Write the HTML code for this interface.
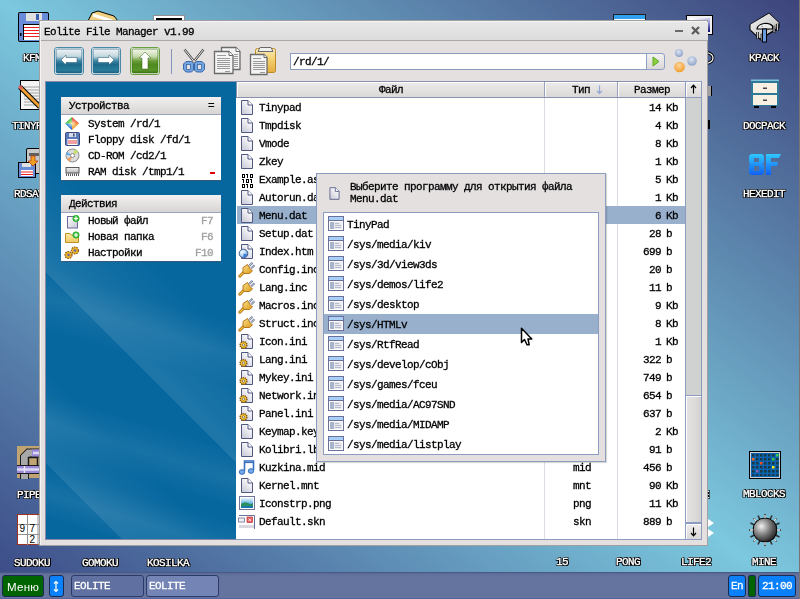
<!DOCTYPE html>
<html><head><meta charset="utf-8">
<style>
*{margin:0;padding:0;box-sizing:border-box}
html,body{width:800px;height:599px;overflow:hidden}
body{position:relative;background:linear-gradient(to bottom left,#3d447c 0%,#7cc8de 50%,#3a4784 100%);font-family:"Liberation Mono",monospace;font-size:11px;letter-spacing:-0.6px;color:#000}
.a{position:absolute}
svg.a{overflow:visible}
.t{position:absolute;white-space:pre;line-height:12px;will-change:transform;-webkit-text-stroke-width:0.3px}
.lbl{position:absolute;white-space:pre;font-family:"Liberation Mono",monospace;font-size:11px;letter-spacing:-0.6px;color:#fff;line-height:10px;will-change:transform;-webkit-text-stroke:0.35px #fff;
 text-shadow:1px 1px 0 #000,1px 0 0 #000,0 1px 0 #000,-1px 0 0 #000,0 -1px 0 #000,-1px 1px 0 #000,1px -1px 0 #000}
#win{left:39px;top:20px;width:669px;height:526px;background:#e4e0e0;border:1px solid #a0a0a0;box-shadow:inset 1px 1px 0 #f4f4f4}
#title{left:1px;top:1px;width:667px;height:19px;background:linear-gradient(#e8e8e8,#dcdcdc);border-bottom:1px solid #a8a8a8}
.hdr{position:absolute;background:linear-gradient(#f2f0f0,#d8d4d4);border-bottom:1px solid #98a4c0}
</style></head><body>

<svg width="0" height="0" style="position:absolute">
 <defs>
  <linearGradient id="gpage" x1="0.8" y1="0.1" x2="0.2" y2="0.9"><stop offset="0" stop-color="#ffffff"/><stop offset="1" stop-color="#cfcfdc"/></linearGradient>
  <linearGradient id="gplug" x1="0" y1="0" x2="1" y2="1"><stop offset="0" stop-color="#fbe08a"/><stop offset="1" stop-color="#d89a18"/></linearGradient>
  <linearGradient id="gsky" x1="0" y1="0" x2="0" y2="1"><stop offset="0" stop-color="#e8f4fc"/><stop offset="0.5" stop-color="#70b8e8"/><stop offset="1" stop-color="#2080c0"/></linearGradient>
  <radialGradient id="gglobe" cx="0.35" cy="0.35" r="0.75"><stop offset="0" stop-color="#f4faff"/><stop offset="0.5" stop-color="#b8d8f4"/><stop offset="1" stop-color="#3a78c8"/></radialGradient>
  <symbol id="i_doc" viewBox="0 0 18 17">
   <path d="M3.5 1.5H10L14.5 6V15.5H3.5Z" fill="url(#gpage)" stroke="#505880"/>
   <path d="M10 1.5V6H14.5" fill="#fff" stroke="#505880"/>
  </symbol>
  <symbol id="i_bin" viewBox="0 0 18 17"><path d="M4 3h3v4h-3z M5 4v2h1v-2z M12 3h3v4h-3z M13 4v2h1v-2z M8 8h3v4h-3z M9 9v2h1v-2z M4 13h3v4h-3z M5 14v2h1v-2z M12 13h3v4h-3z M13 14v2h1v-2z" fill="#000" fill-rule="evenodd"/><path d="M9 3h1v4h-1z M8 3h1v1h-1z M5 8h1v4h-1z M4 8h1v1h-1z M13 8h1v4h-1z M12 8h1v1h-1z M9 13h1v4h-1z M8 13h1v1h-1z" fill="#000"/></symbol>
  <symbol id="i_htm" viewBox="0 0 18 17">
   <path d="M3.5 1.5H10L14.5 6V15.5H3.5Z" fill="url(#gpage)" stroke="#505880"/>
   <path d="M10 1.5V6H14.5" fill="#fff" stroke="#505880"/>
   <circle cx="5.5" cy="10.5" r="4.3" fill="url(#gglobe)" stroke="#4a6090" stroke-width="1"/><path d="M5.5 10.5V14.5Q8 14 9.3 11.5Z" fill="#3a7ad0"/>
  </symbol>
  <symbol id="i_inc" viewBox="0 0 18 17">
   <path d="M1.8 15.2L6.5 10.5" stroke="#9a5a10" stroke-width="2.8" stroke-linecap="round"/>
   <path d="M1.8 15.2L6.5 10.5" stroke="#f8c830" stroke-width="1.4" stroke-linecap="round"/>
   <path d="M9.5 3.5L12 7.5L14.5 10L11.5 12.5H6.5L5 10.5V6.5Z" fill="url(#gplug)" stroke="#b06a10" stroke-width="0.9"/>
   <path d="M11 5L14.5 1.8M13 7.5L16.5 4.3" stroke="#6a7898" stroke-width="2"/>
   <path d="M11 5L14.5 1.8M13 7.5L16.5 4.3" stroke="#eef2f8" stroke-width="0.7"/>
  </symbol>
  <symbol id="i_ini" viewBox="0 0 18 17">
   <path d="M3.5 1.5H10L14.5 6V15.5H3.5Z" fill="url(#gpage)" stroke="#505880"/>
   <path d="M10 1.5V6H14.5" fill="#fff" stroke="#505880"/>
   <circle cx="5.5" cy="12" r="3.4" fill="#f0c030" stroke="#7a4a10" stroke-width="1.4" stroke-dasharray="1.2 0.9"/>
   <circle cx="5.5" cy="12" r="1.1" fill="#fff" stroke="#505050" stroke-width="0.6"/>
  </symbol>
  <symbol id="i_mid" viewBox="0 0 18 17">
   <path d="M6.5 12V2H15.5V11" fill="none" stroke="#3a70c0" stroke-width="1.6"/>
   <path d="M6.5 3.5H15.5" stroke="#3a70c0" stroke-width="1.2"/>
   <ellipse cx="4" cy="13" rx="2.8" ry="2.3" fill="#70a8e8" stroke="#3a70c0"/>
   <ellipse cx="13" cy="12" rx="2.8" ry="2.3" fill="#70a8e8" stroke="#3a70c0"/>
  </symbol>
  <symbol id="i_png" viewBox="0 0 18 17">
   <rect x="1.5" y="1.5" width="15" height="13" fill="#fff" stroke="#70749a"/>
   <rect x="3" y="3" width="12" height="10" fill="url(#gsky)"/>
   <path d="M3 9Q7 6 10 8T15 8V13H3Z" fill="#2a9060"/>
   <path d="M3 11H15V13H3Z" fill="#1a78b0"/>
  </symbol>
  <symbol id="i_skn" viewBox="0 0 18 17">
   <path d="M1 2.5H16.5V16" fill="none" stroke="#6a709a"/>
   <rect x="0.5" y="5" width="6" height="4" fill="#f0f0f0" stroke="#6a709a" stroke-width="0.8"/>
   <rect x="9" y="4" width="5.5" height="5.5" fill="#e86060" stroke="#b02020" stroke-width="0.6"/>
   <path d="M10.5 5.5L13 8M13 5.5L10.5 8" stroke="#fff" stroke-width="0.8"/>
   <rect x="1" y="12" width="15" height="3" fill="#d8d8e0"/>
  </symbol>
  <symbol id="i_app" viewBox="0 0 16 16">
   <rect x="0.5" y="0.5" width="15" height="14" fill="#fff" stroke="#6a709a"/>
   <rect x="1" y="1" width="14" height="3" fill="#a8d0f8"/>
   <path d="M1 4.5H15" stroke="#6a709a"/>
   <rect x="2" y="6" width="4" height="7" fill="#a8b4cc"/>
   <rect x="6" y="6" width="8" height="7" fill="#eaeaee"/>
   <path d="M7 7.5H11M7 9.5H13M7 11.5H13" stroke="#a8b0c8" stroke-width="0.8"/>
  </symbol>
 </defs>
</svg>

<!-- desktop icons left -->
<svg class="a" style="left:17px;top:11px" width="33" height="32">
 <rect x="1" y="1" width="31" height="30" rx="2" fill="#000"/>
 <rect x="2" y="2" width="29" height="28" rx="1" fill="#6a8cd8"/>
 <rect x="9" y="2" width="16" height="8" fill="#e0e0e0"/><rect x="19" y="3" width="3" height="6" fill="#3a60b0"/>
 <rect x="6" y="13" width="22" height="16" fill="#000"/><rect x="7" y="14" width="21" height="15" fill="#fff"/>
 <path d="M7 16.5H28M7 19.5H28M7 22.5H28M7 25.5H28" stroke="#f02020" stroke-width="1.2"/>
 <rect x="3" y="22" width="1.5" height="3" fill="#000"/>
</svg>
<div class="lbl" style="left:23px;top:53px">KFM</div>
<svg class="a" style="left:18px;top:78px" width="24" height="34">
 <rect x="2" y="2" width="26" height="30" fill="#000"/>
 <rect x="3" y="3" width="24" height="28" fill="#f4f4f4"/>
 <path d="M6 9H26M6 12H26M6 15H26M6 18H26M6 21H26M6 24H26M6 27H26" stroke="#a0a0a0" stroke-width="1"/>
 <path d="M2 9L22 29" stroke="#000" stroke-width="5"/>
 <path d="M2 9L22 29" stroke="#f0a030" stroke-width="3"/>
 <path d="M1 8L4 11" stroke="#e06060" stroke-width="3"/>
</svg>
<div class="lbl" style="left:12px;top:121px">TINYPAD</div>
<svg class="a" style="left:17px;top:147px" width="23" height="32">
 <rect x="9" y="1" width="20" height="26" rx="2" fill="#000"/>
 <rect x="10" y="2" width="18" height="24" rx="1" fill="#c8c8c8"/>
 <rect x="12" y="6" width="14" height="3" fill="#606060"/>
 <rect x="1" y="15" width="18" height="16" fill="#000"/>
 <rect x="2" y="16" width="16" height="14" fill="#6a8cd8"/>
 <rect x="5" y="16" width="9" height="4" fill="#e0e0e0"/>
 <rect x="4" y="23" width="12" height="6" fill="#fff"/><path d="M4 25H16M4 27.5H16" stroke="#f02020"/>
 <path d="M14 9H18V14H21L16 19L11 14H14Z" fill="#f0a020" stroke="#c04010" stroke-width="0.8"/>
</svg>
<div class="lbl" style="left:14px;top:189px">RDSAVE</div>
<svg class="a" style="left:16px;top:446px" width="33" height="32">
 <rect x="1" y="0" width="32" height="32" fill="#c0a474"/>
 <path d="M8.5 33V11L12.5 7H33" fill="none" stroke="#1c1c1c" stroke-width="9" stroke-linejoin="miter"/>
 <path d="M8.5 33V11L12.5 7H33" fill="none" stroke="#a8a8a8" stroke-width="7" stroke-linejoin="miter"/>
 <path d="M16 7H33V16" fill="none" stroke="#9a88d8" stroke-width="7"/>
 <path d="M17 7H33" fill="none" stroke="#dcd8f4" stroke-width="2.5"/>
 <rect x="12.5" y="11.5" width="9" height="9" fill="#c0a474" stroke="#1c1c1c" stroke-width="1.5"/>
 <path d="M1 23.5H33" stroke="#1c1c1c" stroke-width="9"/>
 <path d="M1 23.5H33" stroke="#9a88d8" stroke-width="7"/>
 <path d="M1 23.5H33" stroke="#dcd8f4" stroke-width="2.5"/>
 <path d="M8.5 20V27" stroke="#e4e4f0" stroke-width="1.5"/>
</svg>
<div class="lbl" style="left:17px;top:490px">PIPES</div>
<svg class="a" style="left:17px;top:514px" width="23" height="32">
 <rect x="0.5" y="0.5" width="31" height="30" fill="#fff" stroke="#a03020"/>
 <path d="M10.5 1V31M21 1V31M1 10.5H32M1 20.5H32" stroke="#909090"/>
 <text x="2.5" y="18" font-family="Liberation Sans" font-size="10" fill="#000">9</text>
 <text x="12.5" y="18" font-family="Liberation Sans" font-size="10" fill="#000">7</text>
 <text x="12.5" y="29" font-family="Liberation Sans" font-size="10" fill="#000">2</text>
</svg>
<div class="lbl" style="left:14px;top:558px">SUDOKU</div>
<div class="lbl" style="left:82px;top:558px">GOMOKU</div>
<div class="lbl" style="left:147px;top:558px">KOSILKA</div>
<!-- partial icons at top -->
<svg class="a" style="left:84px;top:8px" width="36" height="13">
 <path d="M4 13L8 5L14 3L30 8L34 13Z" fill="#f0d080" stroke="#000" stroke-width="1"/>
 <path d="M9 7L28 13" stroke="#fff" stroke-width="3"/>
</svg>
<div class="a" style="left:153px;top:15px;width:32px;height:6px;background:#fff;border:1px solid #909090;border-bottom:0"><div class="a" style="left:2px;top:2px;width:26px;height:4px;background:#000"></div></div>
<div class="a" style="left:613px;top:14px;width:33px;height:7px;background:#30a0f0;border:1px solid #202020;border-bottom:0;box-shadow:inset 0 -2px 0 #fff"></div>
<div class="a" style="left:686px;top:15px;width:27px;height:20px;background:#000;padding:1px"><div style="width:100%;height:100%;background:#f0f0f0;padding:2px"><div style="width:100%;height:100%;background:linear-gradient(160deg,#fff 10%,#a8a8e0 50%,#10107a 95%)"></div></div></div>
<!-- partial right edge bits -->
<svg class="a" style="left:706px;top:51px" width="10" height="14"><path d="M1 1.5Q7 3 7 7Q7 11 1 12.5" fill="none" stroke="#000" stroke-width="3"/><path d="M1 1.5Q7 3 7 7Q7 11 1 12.5" fill="none" stroke="#fff" stroke-width="1.2"/></svg>
<div class="a" style="left:708px;top:86px;width:4px;height:10px;background:#a0a0a0;border-right:1px solid #000"></div>
<div class="a" style="left:708px;top:120px;width:2px;height:9px;background:#000"></div>
<div class="lbl" style="left:703px;top:490px">E</div>
<div class="a" style="left:708px;top:519px;width:6px;height:8px;background:#fff;clip-path:polygon(0 0,100% 50%,0 100%)"></div>
<div class="a" style="left:708px;top:529px;width:6px;height:8px;background:#fff;clip-path:polygon(0 0,100% 50%,0 100%)"></div>

<!-- desktop icons right -->
<svg class="a" style="left:748px;top:10px" width="33" height="33">
 <defs><linearGradient id="gkp" x1="0" y1="0" x2="1" y2="1"><stop offset="0" stop-color="#f4f4f4"/><stop offset="1" stop-color="#b8b8b8"/></linearGradient></defs>
 <path d="M1.5 14.5L21 2.5L31.5 12.5V18L12 30L1.5 20Z" fill="#000"/>
 <path d="M2.5 14.5L21 3.5L30.5 12.5V17L12 28.5L2.5 19.5Z" fill="url(#gkp)"/>
 <path d="M12 24.5L30.5 13" stroke="#909090" stroke-width="1"/>
 <path d="M9.5 22V29M14 24V31M26 16V23M29.5 14V21" stroke="#000" stroke-width="2.6"/>
 <path d="M9.5 22V28.5M14 24V30.5M26 16V22.5M29.5 14V20.5" stroke="#c8c8c8" stroke-width="1.2"/>
 <path d="M9 18.5Q10 14.5 16 13.5Q22 13 24.5 16V19H9Z" fill="#e8e8e8" stroke="#000" stroke-width="1.2"/>
 <path d="M11 17Q14 15 20 15" stroke="#fff" stroke-width="1"/>
 <rect x="14.5" y="19" width="4" height="13" fill="#6a9ae0" stroke="#000" stroke-width="1"/>
</svg>
<div class="lbl" style="left:749px;top:53px">KPACK</div>
<svg class="a" style="left:750px;top:79px" width="30" height="32">
 <rect x="1" y="0.5" width="28" height="2" fill="#80c0d8"/>
 <rect x="1" y="2" width="28" height="25" fill="#2e7898"/>
 <rect x="3" y="4" width="24" height="10" fill="#f8f0e2"/>
 <rect x="3" y="16" width="24" height="10" fill="#f8f0e2"/>
 <rect x="13" y="8.5" width="4" height="1.5" fill="#404050"/><rect x="13" y="20.5" width="4" height="1.5" fill="#404050"/>
 <rect x="4" y="27" width="5" height="2" fill="#000"/><rect x="21" y="27" width="5" height="2" fill="#000"/>
</svg>
<div class="lbl" style="left:743px;top:121px">DOCPACK</div>
<svg class="a" style="left:748px;top:153px" width="34" height="24">
 <defs><linearGradient id="ghex" x1="0" y1="0" x2="0" y2="1"><stop offset="0" stop-color="#30c8ff"/><stop offset="1" stop-color="#1060f0"/></linearGradient></defs>
 <path d="M3 1H14L16 3V9.5L14.5 11L16 12.5V20L14 22H3L1 20V12.5L2.5 11L1 9.5V3Z M6 5V9H11V5Z M6 13V18H11V13Z" fill="url(#ghex)" fill-rule="evenodd"/>
 <path d="M18 1H33L31 5H23V9H30L29 13H23V22H18Z" fill="url(#ghex)"/>
</svg>
<div class="lbl" style="left:743px;top:189px">HEXEDIT</div>
<svg class="a" style="left:749px;top:451px" width="32" height="28">
 <rect x="0.5" y="0.5" width="31" height="27" fill="#d0d0d0" stroke="#000"/>
 <rect x="2" y="2" width="28" height="24" fill="#0a64b0"/>
 <g fill="#1a3848">
  <path d="M3 3h2.5v2.5H3zM7 3h2.5v2.5H7zM11 3h2.5v2.5H11zM15 3h2.5v2.5H15zM19 3h2.5v2.5H19zM23 3h2.5v2.5H23z"/>
  <path d="M3 7h2.5v2.5H3zM7 7h2.5v2.5H7zM11 7h2.5v2.5H11zM15 7h2.5v2.5H15zM19 7h2.5v2.5H19zM23 7h2.5v2.5H23zM27 7h2.5v2.5H27z"/>
  <path d="M3 11h2.5v2.5H3zM7 11h2.5v2.5H7zM11 11h2.5v2.5H11zM15 11h2.5v2.5H15zM19 11h2.5v2.5H19zM23 11h2.5v2.5H23zM27 11h2.5v2.5H27z"/>
  <path d="M3 15h2.5v2.5H3zM7 15h2.5v2.5H7zM11 15h2.5v2.5H11zM15 15h2.5v2.5H15zM19 15h2.5v2.5H19zM23 15h2.5v2.5H23zM27 15h2.5v2.5H27z"/>
  <path d="M3 19h2.5v2.5H3zM7 19h2.5v2.5H7zM11 19h2.5v2.5H11zM15 19h2.5v2.5H15zM19 19h2.5v2.5H19zM23 19h2.5v2.5H23zM27 19h2.5v2.5H27z"/>
  <path d="M3 23h2.5v2H3zM7 23h2.5v2H7zM11 23h2.5v2H11zM15 23h2.5v2H15zM19 23h2.5v2H19zM23 23h2.5v2H23zM27 23h2.5v2H27z"/>
 </g>
 <rect x="27" y="3" width="2.5" height="2.5" fill="#40d040"/>
 <rect x="3" y="7" width="2.5" height="2.5" fill="#f06020"/>
 <rect x="23" y="7" width="2.5" height="2.5" fill="#40c040"/>
 <rect x="11" y="11" width="2.5" height="2.5" fill="#f05020"/>
 <rect x="23" y="15" width="2.5" height="2.5" fill="#f0f020"/>
 <rect x="7" y="19" width="2.5" height="2.5" fill="#9060c0"/>
</svg>
<div class="lbl" style="left:743px;top:489px">MBLOCKS</div>
<svg class="a" style="left:748px;top:513px" width="34" height="34">
 <defs><radialGradient id="gmine" cx="0.35" cy="0.35" r="0.7"><stop offset="0" stop-color="#f0f0f0"/><stop offset="0.5" stop-color="#808080"/><stop offset="1" stop-color="#202020"/></radialGradient></defs>
 <path d="M17 1V33M1 17H33M5.5 5.5L28.5 28.5M28.5 5.5L5.5 28.5M10 2.5L24 31.5M24 2.5L10 31.5M2.5 10L31.5 24M2.5 24L31.5 10" stroke="#303030" stroke-width="1.6"/>
 <circle cx="17" cy="17" r="12" fill="url(#gmine)" stroke="#000" stroke-width="1"/>
 <path d="M17 2V5M17 29V32M2 17H5M29 17H32M6 6L8 8M26 26L28 28M28 6L26 8M6 28L8 26" stroke="#e8e8e8" stroke-width="1.3"/>
</svg>
<div class="lbl" style="left:752px;top:557px">MINE</div>
<div class="lbl" style="left:556px;top:557px">15</div>
<div class="lbl" style="left:616px;top:557px">PONG</div>
<div class="lbl" style="left:681px;top:557px">LIFE2</div>

<!-- TASKBAR -->
<div class="a" style="left:0;top:572px;width:800px;height:27px;background:linear-gradient(#4a5a88 0px,#4a5a88 1px,#5a6a94 1px,#64749e 4px,#64749e 26px,#56669a 26px)"></div>
<div class="a" style="left:2px;top:575px;width:42px;height:22px;background:#006400;border:1px solid #1a2a50;border-radius:3px"></div>
<div class="a" style="left:7px;top:580px;font-family:'Liberation Sans';font-size:11.5px;letter-spacing:0.3px;color:#fff;line-height:14px;will-change:transform">Меню</div>
<div class="a" style="left:49px;top:575px;width:15px;height:22px;background:#0a80fa;border:1px solid #1a2a50;border-radius:3px"></div>
<svg class="a" style="left:52px;top:580px" width="8" height="13"><path d="M4 1.5V11.5M2 3.5L4 1.5L6 3.5M2 9.5L4 11.5L6 9.5" fill="none" stroke="#fff" stroke-width="1.2"/></svg>
<div class="a" style="left:71px;top:575px;width:73px;height:22px;background:#6070a0;border:1px solid #2a3a6a;border-radius:3px"></div>
<div class="t" style="left:74px;top:580px;color:#fff">EOLITE</div>
<div class="a" style="left:146px;top:575px;width:73px;height:22px;background:#7484b4;border:1px solid #2a3a6a;border-radius:3px"></div>
<div class="t" style="left:149px;top:580px;color:#fff">EOLITE</div>
<div class="a" style="left:728px;top:575px;width:18px;height:22px;background:#0a80fa;border:1px solid #1a2a50;border-radius:3px"></div>
<div class="t" style="left:731px;top:580px;color:#fff">En</div>
<div class="a" style="left:748px;top:575px;width:8px;height:22px;background:#006400;border:1px solid #1a2a50;border-radius:2px"></div>
<div class="a" style="left:758px;top:575px;width:38px;height:22px;background:#0a80fa;border:1px solid #1a2a50;border-radius:3px"></div>
<div class="t" style="left:762px;top:580px;color:#fff">21:00</div>

<!-- WINDOW -->
<div id="win" class="a">
  <div id="title" class="a"></div>
  <div class="t" style="left:4px;top:5px">Eolite File Manager v1.99</div>
  <div class="a" style="left:635px;top:9px;width:8px;height:2px;background:#6a6a6a"></div>
  <svg class="a" style="left:651px;top:5px" width="9" height="9"><path d="M1 1L8 8M8 1L1 8" stroke="#5a5a5a" stroke-width="2.2"/></svg>
</div>

<!-- toolbar buttons -->
<svg class="a" style="left:54px;top:47px" width="30" height="28">
 <defs>
  <linearGradient id="gblue" x1="0" y1="0" x2="0" y2="1">
   <stop offset="0" stop-color="#f0f4f6"/><stop offset="0.3" stop-color="#c4d8e0"/><stop offset="0.5" stop-color="#3a84a4"/><stop offset="0.65" stop-color="#1c6a8a"/><stop offset="0.88" stop-color="#2a7c9c"/><stop offset="1" stop-color="#1e6080"/>
  </linearGradient>
  <linearGradient id="ggreen" x1="0" y1="0" x2="0" y2="1">
   <stop offset="0" stop-color="#f4f6ee"/><stop offset="0.3" stop-color="#c8dcb0"/><stop offset="0.5" stop-color="#6a9c38"/><stop offset="0.65" stop-color="#4e8a1e"/><stop offset="0.88" stop-color="#5a9428"/><stop offset="1" stop-color="#407818"/>
  </linearGradient>
 </defs>
 <rect x="0.5" y="0.5" width="29" height="27" rx="2.5" fill="#fff" stroke="#4a8aa8"/>
 <rect x="2" y="2" width="26" height="24" rx="1.5" fill="url(#gblue)" stroke="#2a6484" stroke-width="0.7"/>
 <path d="M7 13L12 8V10.5H23V15.5H12V18Z" fill="#fff" stroke="#1a4a64" stroke-width="0.8" stroke-opacity="0.6"/>
</svg>
<svg class="a" style="left:91px;top:47px" width="30" height="28">
 <rect x="0.5" y="0.5" width="29" height="27" rx="2.5" fill="#fff" stroke="#4a8aa8"/>
 <rect x="2" y="2" width="26" height="24" rx="1.5" fill="url(#gblue)" stroke="#2a6484" stroke-width="0.7"/>
 <path d="M23 13L18 8V10.5H7V15.5H18V18Z" fill="#fff" stroke="#1a4a64" stroke-width="0.8" stroke-opacity="0.6"/>
</svg>
<svg class="a" style="left:130px;top:47px" width="30" height="28">
 <rect x="0.5" y="0.5" width="29" height="27" rx="2.5" fill="#fff" stroke="#6aa040"/>
 <rect x="2" y="2" width="26" height="24" rx="1.5" fill="url(#ggreen)" stroke="#3e7018" stroke-width="0.7"/>
 <path d="M15 5L21 11H18V22H12V11H9Z" fill="#fff" stroke="#2e5a10" stroke-width="0.8" stroke-opacity="0.6"/>
</svg>
<div class="a" style="left:171px;top:49px;width:1px;height:25px;background:#8494b8"></div>
<!-- scissors -->
<svg class="a" style="left:182px;top:48px" width="25" height="26">
 <path d="M2.5 1.5L12.5 14M21.5 1.5L11.5 14" stroke="#4a4a4a" stroke-width="2.4"/>
 <path d="M2.5 1.5L12.5 14M21.5 1.5L11.5 14" stroke="#fafafa" stroke-width="0.9"/>
 <path d="M4 13.5H9.5L11.5 15.5V22L9.5 24H4L1.5 21.5V16Z" fill="#72a4e0" stroke="#3a68a8" stroke-width="1"/>
 <path d="M14.5 13.5H20L22.5 16V21.5L20 24H14.5L12.5 22V15.5Z" fill="#72a4e0" stroke="#3a68a8" stroke-width="1"/>
 <rect x="4.5" y="16.5" width="4" height="5" fill="#e4e0e0" stroke="#3a68a8" stroke-width="0.8"/>
 <rect x="15.5" y="16.5" width="4" height="5" fill="#e4e0e0" stroke="#3a68a8" stroke-width="0.8"/>
</svg>
<!-- copy -->
<svg class="a" style="left:213px;top:46px" width="29" height="29">
 <path d="M8.5 1.5H23L27 5.5V23.5H8.5Z" fill="#f4f4f4" stroke="#6a6a6a" stroke-width="1.3"/>
 <path d="M23 1.5V5.5H27" fill="#fff" stroke="#6a6a6a" stroke-width="1"/>
 <path d="M21 8.5H25M21 10.5H25M21 12.5H25M21 14.5H25M21 16.5H25M21 18.5H25M21 20.5H25" stroke="#9a9a9a" stroke-width="1"/>
 <path d="M1.5 5.5H16L20 9.5V27.5H1.5Z" fill="#f4f4f4" stroke="#6a6a6a" stroke-width="1.3"/>
 <path d="M16 5.5V9.5H20" fill="#fff" stroke="#6a6a6a" stroke-width="1"/>
 <path d="M4 9.5H13M4 12.5H17M4 14.5H17M4 16.5H17M4 18.5H17M4 20.5H17M4 22.5H17M12 25.5H17" stroke="#9a9a9a" stroke-width="1"/>
</svg>
<!-- paste -->
<svg class="a" style="left:249px;top:46px" width="29" height="31">
 <defs><linearGradient id="ggold" x1="0" y1="0" x2="0" y2="1"><stop offset="0" stop-color="#faecc0"/><stop offset="0.45" stop-color="#f4d070"/><stop offset="1" stop-color="#e4ac40"/></linearGradient></defs>
 <rect x="6.5" y="2.5" width="20" height="24" rx="2" fill="url(#ggold)" stroke="#b88a28" stroke-width="1"/>
 <path d="M9 5.5L11 1.5H22L24 5.5Z" fill="#f0f0f0" stroke="#6a6a6a" stroke-width="1"/>
 <path d="M1.5 8.5H15L18 11.5V28.5H1.5Z" fill="#f4f4f4" stroke="#6a6a6a" stroke-width="1.3"/>
 <path d="M15 8.5V11.5H18" fill="#fff" stroke="#6a6a6a" stroke-width="1"/>
 <path d="M4 12.5H12M4 15.5H16M4 17.5H16M4 19.5H16M4 21.5H16M4 23.5H16M11 26.5H16" stroke="#9a9a9a" stroke-width="1"/>
</svg>
<!-- address bar -->
<div class="a" style="left:290px;top:53px;width:357px;height:17px;background:#fff;border:1px solid #8c9cc0"></div>
<div class="t" style="left:293px;top:56px">/rd/1/</div>
<div class="a" style="left:646px;top:53px;width:19px;height:17px;background:linear-gradient(#f2f0f0,#dcd8d8);border:1px solid #8ca0c8;border-radius:0 3px 3px 0"></div>
<svg class="a" style="left:652px;top:56px" width="8" height="11"><path d="M1 1L7 5.5L1 10Z" fill="#8cd040" stroke="#58a820" stroke-width="1"/></svg>
<!-- balls -->
<svg class="a" style="left:672px;top:46px" width="30" height="30">
 <defs>
  <radialGradient id="bb" cx="0.45" cy="0.35" r="0.6"><stop offset="0" stop-color="#dce4f0"/><stop offset="1" stop-color="#94a8cc"/></radialGradient>
  <radialGradient id="bo" cx="0.45" cy="0.35" r="0.6"><stop offset="0" stop-color="#fcd8a0"/><stop offset="1" stop-color="#f4a030"/></radialGradient>
 </defs>
 <circle cx="7" cy="7" r="4" fill="url(#bb)"/>
 <circle cx="20" cy="15" r="4.8" fill="url(#bb)"/>
 <circle cx="7.5" cy="21" r="5.3" fill="url(#bo)"/>
</svg>

<!-- left blue panel -->
<div class="a" style="left:45px;top:81px;width:192px;height:459px;border:1px solid #8a8aa8;border-right:0;background:
 linear-gradient(45deg,rgba(255,255,255,0) 53px,rgba(255,255,255,.09) 54px,rgba(255,255,255,0) 120px,rgba(255,255,255,0) 188px,rgba(255,255,255,.10) 189px,rgba(255,255,255,0) 270px),
 linear-gradient(17deg,rgba(255,255,255,0) 20px,rgba(255,255,255,.07) 44px,rgba(255,255,255,0) 70px,rgba(255,255,255,0) 85px,rgba(255,255,255,.07) 112px,rgba(255,255,255,0) 140px,rgba(255,255,255,0) 200px,rgba(255,255,255,.07) 231px,rgba(255,255,255,0) 262px),
 #06679f"></div>
<!-- devices box -->
<div class="a" style="left:61px;top:97px;width:160px;height:83px;background:#fff;box-shadow:0 1px 0 #335a7a"></div>
<div class="hdr" style="left:61px;top:97px;width:160px;height:18px"></div>
<div class="t" style="left:69px;top:100px">Устройства</div>
<div class="t" style="left:208px;top:100px">=</div>
<svg class="a" style="left:65px;top:116px" width="15" height="15">
 <defs><clipPath id="cdia"><path d="M7 1L14 7.5L7 14L0 7.5Z"/></clipPath>
 <radialGradient id="gdc" cx="0.5" cy="0.5" r="0.5"><stop offset="0" stop-color="#fff8c0" stop-opacity=".9"/><stop offset="1" stop-color="#fff8c0" stop-opacity="0"/></radialGradient></defs>
 <g clip-path="url(#cdia)">
  <path d="M7 7.5L7 0L15 0L15 7.5Z" fill="#f04848"/>
  <path d="M7 7.5L15 7.5L15 15L7 15Z" fill="#f0a030"/>
  <path d="M7 7.5L7 15L0 15L0 7.5Z" fill="#2a90f0"/>
  <path d="M7 7.5L0 7.5L0 0L7 0Z" fill="#40c040"/>
  <path d="M7 7.5L7 15L-1 15Z" fill="#3070e0"/>
  <path d="M7 7.5L15 0L15 7.5Z" fill="#f07040"/>
  <circle cx="7" cy="7.5" r="5" fill="url(#gdc)"/>
 </g>
</svg>
<div class="t" style="left:88px;top:118px">System /rd/1</div>
<svg class="a" style="left:65px;top:132px" width="15" height="15">
 <rect x="0.5" y="0.5" width="14" height="13" rx="1" fill="#5a7ab8" stroke="#3a4a80"/>
 <rect x="4" y="1" width="7" height="4" fill="#d8dcea"/><rect x="8" y="1.5" width="1.5" height="3" fill="#3a4a80"/>
 <rect x="2.5" y="7" width="10" height="6" fill="#fff"/><path d="M3 9H12M3 11H12" stroke="#e04040" stroke-width="1"/>
</svg>
<div class="t" style="left:88px;top:134px">Floppy disk /fd/1</div>
<svg class="a" style="left:65px;top:148px" width="15" height="15">
 <circle cx="7.5" cy="7.5" r="6.5" fill="#dcdcdc" stroke="#8a8a8a"/>
 <path d="M7.5 7.5L13 4A6.5 6.5 0 0 0 10 1.5Z" fill="#c0e060"/><path d="M7.5 7.5L2 11A6.5 6.5 0 0 0 5 13.5Z" fill="#f0a060"/><path d="M7.5 7.5L2 4A6.5 6.5 0 0 0 1 7Z" fill="#60b0f0"/>
 <circle cx="7.5" cy="7.5" r="2" fill="#fff" stroke="#8a8a8a"/>
</svg>
<div class="t" style="left:88px;top:150px">CD-ROM /cd2/1</div>
<svg class="a" style="left:65px;top:167px" width="15" height="10">
 <defs><linearGradient id="gram" x1="0" y1="0" x2="0" y2="1"><stop offset="0" stop-color="#f4f4f4"/><stop offset="1" stop-color="#b8b8b8"/></linearGradient></defs>
 <rect x="1" y="0.5" width="13" height="5.5" fill="url(#gram)" stroke="#5a5a5a"/>
 <path d="M1.5 6.5V9M3.5 6.5V9M5.5 6.5V9M7.5 6.5V9M9.5 6.5V9M11.5 6.5V9M13.5 6.5V9" stroke="#5a5a5a" stroke-width="1"/>
</svg>
<div class="t" style="left:88px;top:166px">RAM disk /tmp1/1</div>
<div class="a" style="left:210px;top:172px;width:5px;height:2px;background:#e00000"></div>

<!-- actions box -->
<div class="a" style="left:61px;top:195px;width:160px;height:66px;background:#fff;box-shadow:0 1px 0 #335a7a"></div>
<div class="hdr" style="left:61px;top:195px;width:160px;height:18px"></div>
<div class="t" style="left:69px;top:198px">Действия</div>
<svg class="a" style="left:66px;top:215px" width="15" height="14">
 <defs><linearGradient id="gdoc" x1="0" y1="0" x2="1" y2="1"><stop offset="0" stop-color="#fff"/><stop offset="1" stop-color="#c8c8d8"/></linearGradient></defs>
 <rect x="1.5" y="1.5" width="10" height="11.5" fill="url(#gdoc)" stroke="#6a6a9a"/>
 <circle cx="10" cy="3.5" r="3.2" fill="#40c040" stroke="#20a020" stroke-width="0.6"/>
 <path d="M10 1.5V5.5M8 3.5H12" stroke="#fff" stroke-width="1.2"/>
</svg>
<div class="t" style="left:88px;top:215px">Новый файл</div>
<div class="t" style="left:201px;top:215px;color:#a0a0a0">F7</div>
<svg class="a" style="left:65px;top:231px" width="15" height="13">
 <defs><linearGradient id="gfold" x1="0" y1="0" x2="0" y2="1"><stop offset="0" stop-color="#fbeaa8"/><stop offset="1" stop-color="#f0c860"/></linearGradient></defs>
 <path d="M0.5 2.5H5L6.5 4H13.5V11.5H0.5Z" fill="url(#gfold)" stroke="#c09020"/>
 <circle cx="11" cy="4" r="3.2" fill="#40c040" stroke="#20a020" stroke-width="0.6"/>
 <path d="M11 2V6M9 4H13" stroke="#fff" stroke-width="1.2"/>
</svg>
<div class="t" style="left:88px;top:231px">Новая папка</div>
<div class="t" style="left:201px;top:231px;color:#a0a0a0">F6</div>
<svg class="a" style="left:64px;top:246px" width="16" height="14">
 <circle cx="4.5" cy="9" r="3.5" fill="#e8b030" stroke="#8a5a10" stroke-width="1.2" stroke-dasharray="1.5 1"/>
 <circle cx="11" cy="4.5" r="3.5" fill="#e8b030" stroke="#8a5a10" stroke-width="1.2" stroke-dasharray="1.5 1"/>
 <circle cx="4.5" cy="9" r="1.2" fill="#6a6a9a"/><circle cx="11" cy="4.5" r="1.2" fill="#6a6a9a"/>
</svg>
<div class="t" style="left:88px;top:247px">Настройки</div>
<div class="t" style="left:195px;top:247px;color:#a0a0a0">F10</div>

<!-- file list -->
<div class="a" style="left:236px;top:81px;width:450px;height:459px;background:#fff;border-top:1px solid #8890b0"></div>
<div class="a" style="left:236px;top:81px;width:1px;height:17px;background:#8890b0"></div>
<div class="a" style="left:237px;top:82px;width:448px;height:15px;background:linear-gradient(#eceaea,#dcd8d8);box-shadow:inset 1px 1px 0 #fff"></div>
<div class="a" style="left:236px;top:97px;width:450px;height:1px;background:#8890b0"></div>
<div class="a" style="left:544px;top:82px;width:1px;height:15px;background:#98a0c0;box-shadow:1px 0 0 #fff"></div>
<div class="a" style="left:617px;top:82px;width:1px;height:15px;background:#98a0c0;box-shadow:1px 0 0 #fff"></div>
<div class="a" style="left:544px;top:98px;width:1px;height:441px;background:#dcdce4"></div>
<div class="a" style="left:617px;top:98px;width:1px;height:441px;background:#dcdce4"></div>
<div class="a" style="left:237px;top:206px;width:448px;height:18px;background:#98b0cc"></div>
<div class="t" style="left:379px;top:84px">Файл</div>
<div class="t" style="left:572px;top:84px">Тип</div>
<svg class="a" style="left:596px;top:85px" width="7" height="10"><path d="M3.5 0.5V9M1 6L3.5 8.5L6 6" fill="none" stroke="#94a4d4" stroke-width="1.2"/></svg>
<div class="t" style="left:634px;top:84px">Размер</div>

<svg class="a" style="left:238px;top:99px" width="18" height="17"><use href="#i_doc"/></svg>
<div class="t" style="left:259px;top:102px">Tinypad</div>
<div class="t" style="left:649px;top:102px">14</div>
<div class="t" style="left:666px;top:102px">Kb</div>
<svg class="a" style="left:238px;top:117px" width="18" height="17"><use href="#i_doc"/></svg>
<div class="t" style="left:259px;top:120px">Tmpdisk</div>
<div class="t" style="left:655px;top:120px">4</div>
<div class="t" style="left:666px;top:120px">Kb</div>
<svg class="a" style="left:238px;top:135px" width="18" height="17"><use href="#i_doc"/></svg>
<div class="t" style="left:259px;top:138px">Vmode</div>
<div class="t" style="left:655px;top:138px">8</div>
<div class="t" style="left:666px;top:138px">Kb</div>
<svg class="a" style="left:238px;top:153px" width="18" height="17"><use href="#i_doc"/></svg>
<div class="t" style="left:259px;top:156px">Zkey</div>
<div class="t" style="left:655px;top:156px">1</div>
<div class="t" style="left:666px;top:156px">Kb</div>
<svg class="a" style="left:238px;top:171px" width="18" height="17"><use href="#i_bin"/></svg>
<div class="t" style="left:259px;top:174px">Example.asm</div>
<div class="t" style="left:655px;top:174px">5</div>
<div class="t" style="left:666px;top:174px">Kb</div>
<svg class="a" style="left:238px;top:189px" width="18" height="17"><use href="#i_doc"/></svg>
<div class="t" style="left:259px;top:192px">Autorun.dat</div>
<div class="t" style="left:655px;top:192px">1</div>
<div class="t" style="left:666px;top:192px">Kb</div>
<svg class="a" style="left:238px;top:207px" width="18" height="17"><use href="#i_doc"/></svg>
<div class="t" style="left:259px;top:210px">Menu.dat</div>
<div class="t" style="left:655px;top:210px">6</div>
<div class="t" style="left:666px;top:210px">Kb</div>
<svg class="a" style="left:238px;top:225px" width="18" height="17"><use href="#i_doc"/></svg>
<div class="t" style="left:259px;top:228px">Setup.dat</div>
<div class="t" style="left:649px;top:228px">28</div>
<div class="t" style="left:666px;top:228px">b</div>
<svg class="a" style="left:238px;top:243px" width="18" height="17"><use href="#i_htm"/></svg>
<div class="t" style="left:259px;top:246px">Index.htm</div>
<div class="t" style="left:643px;top:246px">699</div>
<div class="t" style="left:666px;top:246px">b</div>
<svg class="a" style="left:238px;top:261px" width="18" height="17"><use href="#i_inc"/></svg>
<div class="t" style="left:259px;top:264px">Config.inc</div>
<div class="t" style="left:649px;top:264px">20</div>
<div class="t" style="left:666px;top:264px">b</div>
<svg class="a" style="left:238px;top:279px" width="18" height="17"><use href="#i_inc"/></svg>
<div class="t" style="left:259px;top:282px">Lang.inc</div>
<div class="t" style="left:649px;top:282px">11</div>
<div class="t" style="left:666px;top:282px">b</div>
<svg class="a" style="left:238px;top:297px" width="18" height="17"><use href="#i_inc"/></svg>
<div class="t" style="left:259px;top:300px">Macros.inc</div>
<div class="t" style="left:655px;top:300px">9</div>
<div class="t" style="left:666px;top:300px">Kb</div>
<svg class="a" style="left:238px;top:315px" width="18" height="17"><use href="#i_inc"/></svg>
<div class="t" style="left:259px;top:318px">Struct.inc</div>
<div class="t" style="left:655px;top:318px">8</div>
<div class="t" style="left:666px;top:318px">Kb</div>
<svg class="a" style="left:238px;top:333px" width="18" height="17"><use href="#i_ini"/></svg>
<div class="t" style="left:259px;top:336px">Icon.ini</div>
<div class="t" style="left:655px;top:336px">1</div>
<div class="t" style="left:666px;top:336px">Kb</div>
<svg class="a" style="left:238px;top:351px" width="18" height="17"><use href="#i_ini"/></svg>
<div class="t" style="left:259px;top:354px">Lang.ini</div>
<div class="t" style="left:643px;top:354px">322</div>
<div class="t" style="left:666px;top:354px">b</div>
<svg class="a" style="left:238px;top:369px" width="18" height="17"><use href="#i_ini"/></svg>
<div class="t" style="left:259px;top:372px">Mykey.ini</div>
<div class="t" style="left:643px;top:372px">749</div>
<div class="t" style="left:666px;top:372px">b</div>
<svg class="a" style="left:238px;top:387px" width="18" height="17"><use href="#i_ini"/></svg>
<div class="t" style="left:259px;top:390px">Network.ini</div>
<div class="t" style="left:643px;top:390px">654</div>
<div class="t" style="left:666px;top:390px">b</div>
<svg class="a" style="left:238px;top:405px" width="18" height="17"><use href="#i_ini"/></svg>
<div class="t" style="left:259px;top:408px">Panel.ini</div>
<div class="t" style="left:643px;top:408px">637</div>
<div class="t" style="left:666px;top:408px">b</div>
<svg class="a" style="left:238px;top:423px" width="18" height="17"><use href="#i_doc"/></svg>
<div class="t" style="left:259px;top:426px">Keymap.key</div>
<div class="t" style="left:655px;top:426px">2</div>
<div class="t" style="left:666px;top:426px">Kb</div>
<svg class="a" style="left:238px;top:441px" width="18" height="17"><use href="#i_doc"/></svg>
<div class="t" style="left:259px;top:444px">Kolibri.lbl</div>
<div class="t" style="left:649px;top:444px">91</div>
<div class="t" style="left:666px;top:444px">b</div>
<svg class="a" style="left:238px;top:459px" width="18" height="17"><use href="#i_mid"/></svg>
<div class="t" style="left:259px;top:462px">Kuzkina.mid</div>
<div class="t" style="left:573px;top:462px">mid</div>
<div class="t" style="left:643px;top:462px">456</div>
<div class="t" style="left:666px;top:462px">b</div>
<svg class="a" style="left:238px;top:477px" width="18" height="17"><use href="#i_doc"/></svg>
<div class="t" style="left:259px;top:480px">Kernel.mnt</div>
<div class="t" style="left:573px;top:480px">mnt</div>
<div class="t" style="left:649px;top:480px">90</div>
<div class="t" style="left:666px;top:480px">Kb</div>
<svg class="a" style="left:238px;top:495px" width="18" height="17"><use href="#i_png"/></svg>
<div class="t" style="left:259px;top:498px">Iconstrp.png</div>
<div class="t" style="left:573px;top:498px">png</div>
<div class="t" style="left:649px;top:498px">11</div>
<div class="t" style="left:666px;top:498px">Kb</div>
<svg class="a" style="left:238px;top:513px" width="18" height="17"><use href="#i_skn"/></svg>
<div class="t" style="left:259px;top:516px">Default.skn</div>
<div class="t" style="left:573px;top:516px">skn</div>
<div class="t" style="left:643px;top:516px">889</div>
<div class="t" style="left:666px;top:516px">b</div>
<!-- scrollbar -->
<div class="a" style="left:685px;top:81px;width:17px;height:459px;background:#d0d2d2;border:1px solid #8c9cc0;border-bottom:0"></div>
<div class="a" style="left:686px;top:82px;width:15px;height:15px;background:linear-gradient(#eeecec,#dcd8d8);box-shadow:inset 1px 1px 0 #fff"></div>
<div class="a" style="left:685px;top:97px;width:17px;height:1px;background:#8c9cc0"></div>
<svg class="a" style="left:690px;top:84px" width="7" height="10"><path d="M3.5 9.5V1M1 4L3.5 1.2L6 4" fill="none" stroke="#000" stroke-width="1.2"/></svg>
<div class="a" style="left:686px;top:395px;width:15px;height:128px;background:linear-gradient(90deg,#e6e2e2,#dcdada 60%,#d0d0d0);border-top:1px solid #8c9cc0;box-shadow:inset 1px 1px 0 #fff"></div>
<div class="a" style="left:686px;top:522px;width:15px;height:2px;background:#8c9cc0"></div>
<div class="a" style="left:686px;top:524px;width:15px;height:15px;background:linear-gradient(#eeecec,#dcd8d8);box-shadow:inset 1px 1px 0 #fff"></div>
<svg class="a" style="left:690px;top:527px" width="7" height="10"><path d="M3.5 0.5V9M1 6L3.5 8.8L6 6" fill="none" stroke="#000" stroke-width="1.2"/></svg>
<div class="a" style="left:236px;top:539px;width:466px;height:1px;background:#8c9cc0"></div>

<!-- popup -->
<div class="a" style="left:316px;top:173px;width:290px;height:289px;background:#e4e0e0;border:1px solid #8c9cc0;box-shadow:1px 1px 1px rgba(0,0,0,.15)"></div>
<svg class="a" style="left:327px;top:185px" width="15" height="17"><use href="#i_doc"/></svg>
<div class="t" style="left:350px;top:181px">Выберите программу для открытия файла</div>
<div class="t" style="left:350px;top:193px">Menu.dat</div>
<div class="a" style="left:323px;top:212px;width:276px;height:243px;background:#fff;border:1px solid #8c9cc0"></div>
<div class="a" style="left:324px;top:314px;width:274px;height:20px;background:#98b0cc"></div>

<svg class="a" style="left:328px;top:216px" width="16" height="16"><use href="#i_app"/></svg>
<div class="t" style="left:347px;top:219px">TinyPad</div>
<svg class="a" style="left:328px;top:236px" width="16" height="16"><use href="#i_app"/></svg>
<div class="t" style="left:347px;top:239px">/sys/media/kiv</div>
<svg class="a" style="left:328px;top:256px" width="16" height="16"><use href="#i_app"/></svg>
<div class="t" style="left:347px;top:259px">/sys/3d/view3ds</div>
<svg class="a" style="left:328px;top:276px" width="16" height="16"><use href="#i_app"/></svg>
<div class="t" style="left:347px;top:279px">/sys/demos/life2</div>
<svg class="a" style="left:328px;top:296px" width="16" height="16"><use href="#i_app"/></svg>
<div class="t" style="left:347px;top:299px">/sys/desktop</div>
<svg class="a" style="left:328px;top:316px" width="16" height="16"><use href="#i_app"/></svg>
<div class="t" style="left:347px;top:319px">/sys/HTMLv</div>
<svg class="a" style="left:328px;top:336px" width="16" height="16"><use href="#i_app"/></svg>
<div class="t" style="left:347px;top:339px">/sys/RtfRead</div>
<svg class="a" style="left:328px;top:356px" width="16" height="16"><use href="#i_app"/></svg>
<div class="t" style="left:347px;top:359px">/sys/develop/cObj</div>
<svg class="a" style="left:328px;top:376px" width="16" height="16"><use href="#i_app"/></svg>
<div class="t" style="left:347px;top:379px">/sys/games/fceu</div>
<svg class="a" style="left:328px;top:396px" width="16" height="16"><use href="#i_app"/></svg>
<div class="t" style="left:347px;top:399px">/sys/media/AC97SND</div>
<svg class="a" style="left:328px;top:416px" width="16" height="16"><use href="#i_app"/></svg>
<div class="t" style="left:347px;top:419px">/sys/media/MIDAMP</div>
<svg class="a" style="left:328px;top:436px" width="16" height="16"><use href="#i_app"/></svg>
<div class="t" style="left:347px;top:439px">/sys/media/listplay</div>
<!-- cursor -->
<svg class="a" style="left:520px;top:327px" width="14" height="20">
 <path d="M1.5 1.2V15.5L4.5 12.5L7 17.8H9.2L8 12H11.8Z" fill="#fff" stroke="#000" stroke-width="1.5" stroke-linejoin="round"/>
</svg>
<div class="a" style="left:799px;top:0;width:1px;height:599px;background:#787474"></div>

</body></html>
